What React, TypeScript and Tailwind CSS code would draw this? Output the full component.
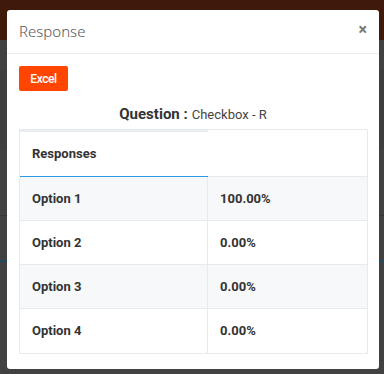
import React from "react";

const rows = [
  { name: "Option 1", value: "100.00%", shade: true },
  { name: "Option 2", value: "0.00%", shade: false },
  { name: "Option 3", value: "0.00%", shade: true },
  { name: "Option 4", value: "0.00%", shade: false },
];

export default function App() {
  return (
    <div className="relative w-[384px] h-[374px] overflow-hidden" style={{ fontFamily: "Roboto, 'Liberation Sans', sans-serif" }}>
      {/* background page under overlay */}
      <div className="flex flex-col h-full">
        <div className="h-[40px] bg-[#3f1a0b]" />
        <div className="flex-1 bg-[#414141] flex flex-col">
          <div className="h-[30px]" />
          <div className="h-[80px] bg-[#3d3e40]" />
          <div className="h-[66px] border-b border-[#363636]" />
          <div className="h-[46px] border-b-2 border-[#1e4a5e]" />
        </div>
      </div>

      {/* modal */}
      <div className="absolute left-[7px] top-[10px] w-[372px] h-[359px] bg-white rounded-[3px] flex flex-col">
        <div className="h-[44px] border-b border-[#e9ecef] flex items-center justify-between pl-[12px] pr-[12px]">
          <span className="text-[15px] text-[#555] font-light" style={{ fontFamily: "'Noto Sans', 'Open Sans', sans-serif" }}>Response</span>
          <span className="text-[16px] text-[#777] font-bold leading-none -mt-[3px]">×</span>
        </div>
        <div className="px-[12px] pt-[12px] flex flex-col">
          <div>
            <button className="h-[25px] w-[49px] bg-[#ff4500] rounded-[2px] text-white text-[12px] font-medium tracking-[-0.4px] flex items-center justify-center">
              Excel
            </button>
          </div>
          <div className="mt-[12px] h-[22px] flex items-baseline justify-center text-[#333]">
            <span className="text-[15px] font-bold">Question :</span>
            <span className="text-[13px] ml-[4px] text-[#444]">Checkbox - R</span>
          </div>
          <div className="mt-[4px] w-[349px] border border-[#e6e9ed] text-[13px] font-bold text-[#333]">
            <div className="grid grid-cols-[188px_1fr] h-[47px]">
              <div className="flex items-center pl-[12px] border-b-[1.5px] border-[#2c9ae0] border-t-2 border-t-[#e9ecf0]">Responses</div>
              <div className="border-b border-[#e6e9ed]" />
            </div>
            {rows.map((r, i) => (
              <div
                key={r.name}
                className={`grid grid-cols-[188px_1fr] h-[44px] ${r.shade ? "bg-[#f7f8fa]" : "bg-white"} ${i < rows.length - 1 ? "border-b border-[#e6e9ed]" : ""}`}
              >
                <div className="flex items-center pl-[12px] border-r border-[#e6e9ed]">{r.name}</div>
                <div className="flex items-center pl-[12px]">{r.value}</div>
              </div>
            ))}
          </div>
        </div>
      </div>
    </div>
  );
}
